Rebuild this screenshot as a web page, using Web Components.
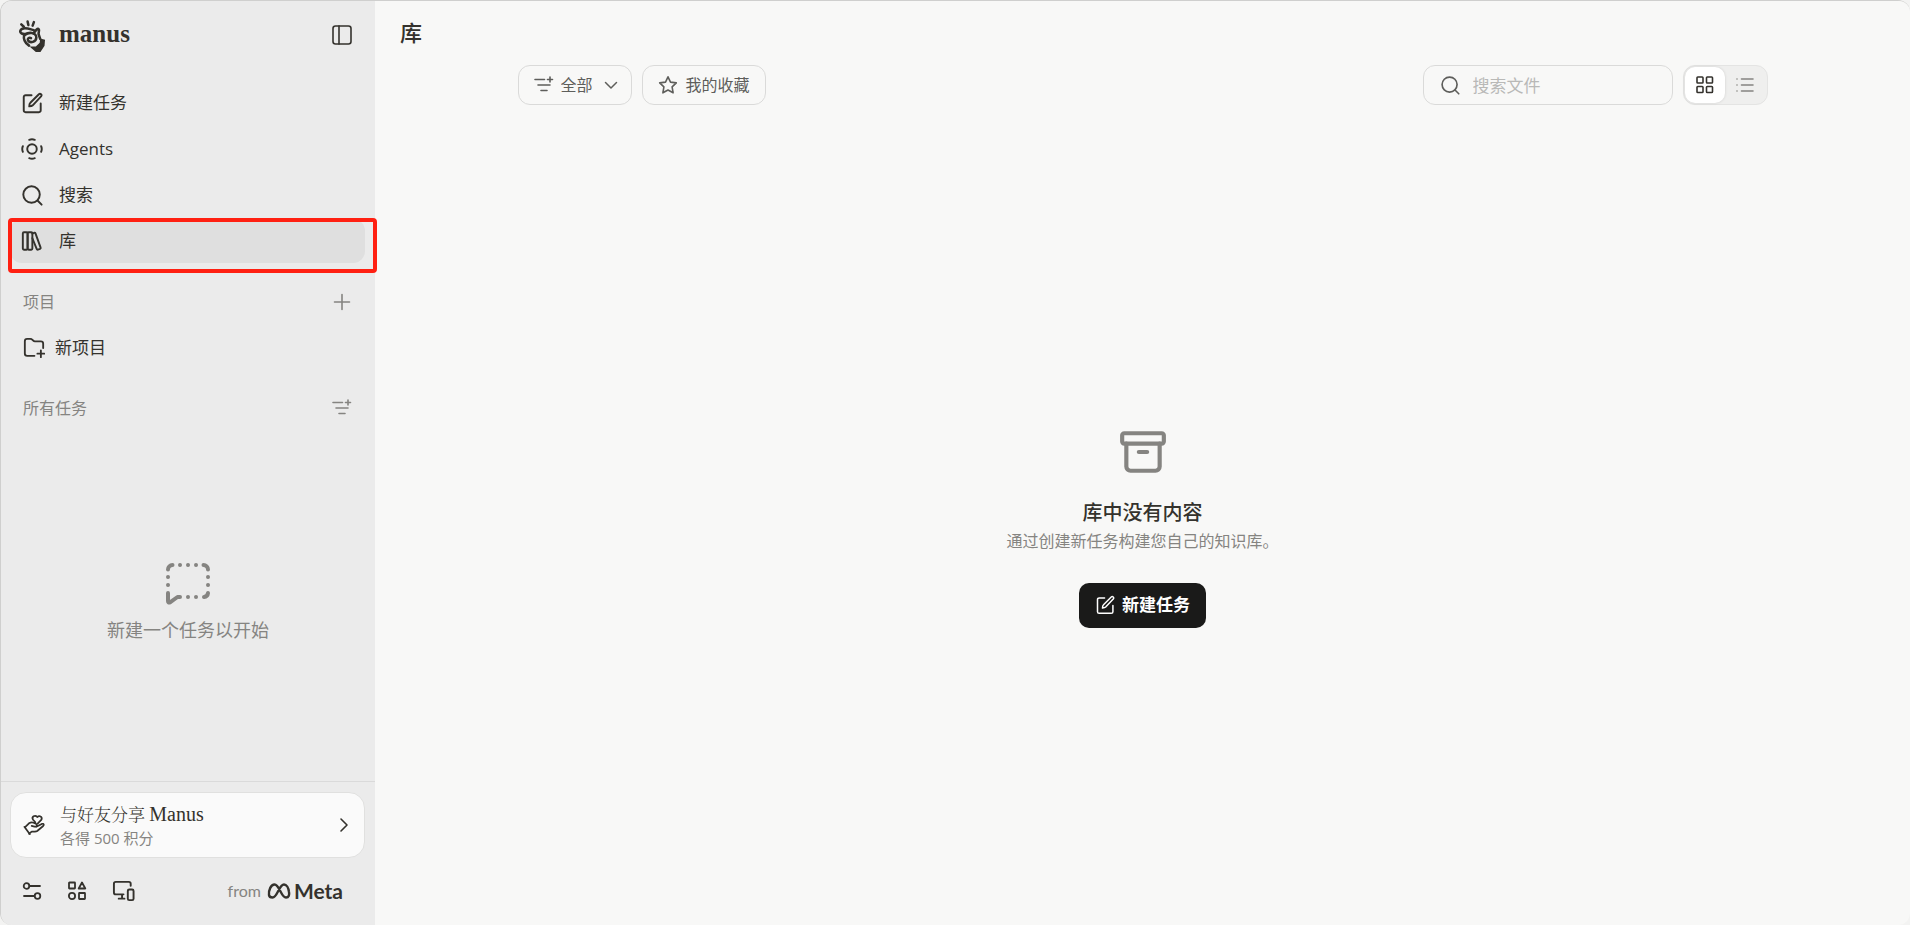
<!DOCTYPE html>
<html lang="zh-CN">
<head>
<meta charset="utf-8">
<title>Manus 库</title>
<style>
html, body { margin: 0; height: 100%; background: #f3f3f2; }
body { font-family: "Open Sans", "Noto Sans CJK SC", sans-serif; color: #34322d; }
</style>
</head>
<body>
<manus-app></manus-app>
<script>
const icons = {
  logo: ['0 0 32 36', `<g stroke-width="2.6"><path d="M6.500 7.500l2.600 2.500M13 4.500l.800 3.800M19.500 5.200l-1.300 3.700"/><path d="M19 17l3.200-4q2-2 2.600.500l-.500 4 1.700 5M19.500 13.500c-3-.500-6-2.300-10.500-1.800-4 .500-4.500 4-2 5.300 2 .800 3.500.300 4.500.300M9.500 18c-1.200 5 .500 8.500 5 11.500"/><path d="M10 18.500c5.500-4 12-2 12 2.700s-6.500 6-8.500 3c-1-2 1-3.500 3-2.500"/></g><path d="M26 22l5 1.500-.500 6-4.500 7-4.500-.500-6.500-5.500 6.500-.200 4-3.800z" fill="currentColor" stroke="none"/>`],
  panel: ['0 0 20 20', '<rect x="1" y="1" width="18" height="18" rx="2.500"/><path d="M7 1v18"/>'],
  edit: ['0 0 24 24', '<path d="M11.500 3.500H5a2 2 0 0 0-2 2V20a2 2 0 0 0 2 2h14.500a2 2 0 0 0 2-2v-7.500"/><path d="M19.500 2.400a1.700 1.700 0 0 1 2.400 2.400L12.800 14.500q-1 1-3.800 1.200 0-3 1.200-4z"/>'],
  agents: ['0 0 24 24', '<circle cx="12" cy="12" r="5.200"/><path d="M9 2q3-1.300 6 0M9 22q3 1.300 6 0M2 9q-1.300 3 0 6M22 9q1.300 3 0 6"/>'],
  search: ['0 0 24 24', '<circle cx="11.500" cy="11.500" r="9"/><path d="M18 18l4.500 4.500"/>'],
  library: ['0 0 24 24', '<rect x="2" y="2.500" width="5.200" height="19" rx="1.200"/><rect x="7.200" y="2.500" width="5.200" height="19" rx="1.200"/><path d="M12.400 4l2-1q1-.300 1.400.700l5.600 15.500q.300 1-.600 1.400l-2.300.800q-1 .300-1.400-.700L12.400 9"/>'],
  plus: ['0 0 20 20', '<path d="M10 2.500v15M2.500 10h15"/>'],
  folder: ['0 0 24 24', '<path d="M12.500 20.500H4.500A2.500 2.500 0 0 1 2 18V4.500A2.500 2.500 0 0 1 4.500 2H8q1.400 0 2.200 1l1 1q.700.800 1.800.800h6.500A2.500 2.500 0 0 1 22 7.300V12M19.500 14.500v7.500M15.700 18.200h7.600"/>'],
  filter: ['0 0 20 20', '<path d="M1 4.500h9.500M4 10h12M7 15.500h6M16 2v5M13.500 4.500h5"/>'],
  chat: ['0 0 50 50', '<path d="M5 10.500A4.500 4.500 0 0 1 9.500 6M40.500 6a4.500 4.500 0 0 1 4.500 4.500M45 34a4.500 4.500 0 0 1-4 4M17 38h-2.500L7 43.400q-2 .800-2-1.400v-8M17 6h.010M25 6h.010M33 6h.010M5 18h.010M5 26h.010M45 18h.010M45 26h.010M25 38h.010M33 38h.010"/>'],
  share: ['0 0 24 24', '<path d="M2 14.500l4.500-4.300q2.500-1.600 5-.700l2.500 1.200q2 1.300.500 2.800-.700.500-2 .200l-3-.700M14.500 14l6-3.200q2-.600 2.200 1 0 .800-1 1.600l-6.200 5.100q-1 .700-2.500.700H9.500L6.500 21.500M1.500 14l6 8M13.500 9L11 6.300q-1.600-2.300.5-3.800 2.300-1.200 4 .8 2-1.800 4-.4 1.700 1.600.4 3.600l-3.700 3.800"/>'],
  chevronRight: ['0 0 20 20', '<path d="M7 4l6 6-6 6"/>'],
  chevronDown: ['0 0 20 20', '<path d="M4.500 7.500l5.500 5.500 5.500-5.500"/>'],
  sliders: ['0 0 20 20', '<circle cx="4.500" cy="5" r="2.800"/><circle cx="15.500" cy="15" r="2.800"/><path d="M7.500 5h10.500M2 15h10.500"/>'],
  shapes: ['0 0 20 20', '<rect x="2" y="1.500" width="6" height="6" rx=".500"/><rect x="12" y="12" width="6" height="6" rx=".500"/><circle cx="5" cy="15" r="3.100"/><path d="M15 1.500l3.300 6h-6.600z"/>'],
  devices: ['0 0 24 24', '<path d="M12 16H4a2 2 0 0 1-2-2V5a2 2 0 0 1 2-2h13.500a2 2 0 0 1 2 2v2M10.500 16v4M7 20.500h6"/><rect x="16.500" y="11" width="6" height="11" rx="1.500"/>'],
  meta: ['0 0 24 16', '<path d="M2 12C1.500 7 4 1.500 7.500 1.500c5 0 6.500 13 11.500 13 3 0 3.500-3 3-5.500-.500-4-2.500-7.500-5-7.500-5 0-6.500 13-11.500 13Q2.300 14.500 2 12z"/>'],
  star: ['0 0 20 20', '<path d="M10 1.800l2.500 5.300 5.800.8-4.200 4 1 5.900-5.100-2.800-5.100 2.800 1-5.900-4.200-4 5.800-.8z"/>'],
  grid: ['0 0 20 20', '<rect x="2" y="2" width="6" height="6" rx=".800"/><rect x="11.500" y="2" width="6" height="6" rx=".800"/><rect x="2" y="11.500" width="6" height="6" rx=".800"/><rect x="11.500" y="11.500" width="6" height="6" rx=".800"/>'],
  list: ['0 0 20 20', '<path d="M6.500 4h11.500M6.500 10h11.500M6.500 16h11.500M2 4h.010M2 10h.010M2 16h.010"/>'],
  archive: ['0 0 24 24', '<rect x="2" y="3" width="20" height="5" rx="1"/><path d="M4 8v11a2 2 0 0 0 2 2h12a2 2 0 0 0 2-2V8M10 12h4"/>']
};
const define = (name, markup) => customElements.define(name, class extends HTMLElement {
  constructor() {
    super();
    this.attachShadow({ mode: 'open' }).innerHTML = `<style>*{box-sizing:border-box}button,input,select{font:inherit;color:inherit;margin:0;padding:0;border:0;background:none}a{color:inherit;text-decoration:none}h1,h2,p{margin:0}</style>` + (typeof markup === 'function' ? markup(this) : markup);
  }
});

define('m-icon', el => {
  const [box, body] = icons[el.getAttribute('name')];
  const w = el.getAttribute('width') || el.getAttribute('size') || 20;
  const h = el.getAttribute('height') || el.getAttribute('size') || 20;
  return `<style>:host{display:block;flex:none}svg{display:block}</style>
  <svg width="${w}" height="${h}" viewBox="${box}" fill="none" stroke="currentColor" stroke-width="${el.getAttribute('stroke') || 1.6}" stroke-linecap="round" stroke-linejoin="round" aria-hidden="true">${body}</svg>`;
});

define('nav-item', el => `<style>
:host{display:block;position:relative}
a{display:flex;align-items:center;gap:16px;height:44px;padding:0 11px;border-radius:12px;font-size:17px;line-height:24px}
:host([active]) a{background:#dfdfdf}
</style><a href="#"${el.hasAttribute('active') ? ' aria-current="page"' : ''}><m-icon name="${el.getAttribute('icon')}" size="22" stroke="2.1"></m-icon><slot></slot></a><slot name="mark"></slot>`);

define('highlight-box', `<style>:host{position:absolute;inset:-1px -12px -10px -2px;border:4px solid #ff2012;border-radius:4px;z-index:2;pointer-events:none}</style>`);

define('section-head', el => `<style>
:host{display:flex;align-items:center;justify-content:space-between;height:40px;padding:0 13px;color:#858481;font-size:16px;line-height:24px}
h2{font-size:inherit;font-weight:400}button{display:block}
</style><h2><slot></slot></h2><button aria-label="${el.getAttribute('action')}"><m-icon name="${el.getAttribute('icon')}" size="20" stroke="1.6"></m-icon></button>`);

define('share-card', `<style>
:host{display:block}
a{display:flex;align-items:center;gap:15px;height:66px;padding:0 10px 0 12px;background:#fafafa;border:1px solid #e0e0df;border-radius:16px}
div{flex:1}
.t{font:300 17px/24px "Liberation Serif","Noto Serif CJK SC","Noto Sans CJK SC",serif}
.t span{font-size:20px}
.s{font-size:15px;line-height:20px;color:#858481}
m-icon{color:#34322d}
</style><a href="#"><m-icon name="share" size="22" stroke="1.9"></m-icon><div><p class="t">与好友分享 <span>Manus</span></p><p class="s">各得 500 积分</p></div><m-icon name="chevronRight" size="20"></m-icon></a>`);

define('side-bar', `<style>
:host{display:flex;flex-direction:column;position:relative;z-index:1;width:374px;flex:none;background:#ebebeb}
header{display:flex;align-items:center;justify-content:space-between;padding:12px 23px 0 14px;height:54px}
header button{padding-top:2px}
.brand{display:flex;align-items:center;gap:13px;font:700 25px/30px "Liberation Serif",serif}
nav{display:flex;flex-direction:column;gap:2px;padding:26px 10px 0 9px}
.head{padding:19px 10px 0 9px}
.project{display:flex;align-items:center;gap:10px;height:44px;padding:0 13px;margin:4px 9px 0;font-size:17px;line-height:24px}
.project + .head{padding-top:18px}
.empty{flex:1;display:flex;flex-direction:column;align-items:center;justify-content:center;gap:9px;color:#858481;font-size:18px;line-height:24px;padding-bottom:8px}
footer{border-top:1px solid #dadada;padding:10px 10px 0 9px;height:144px}
.tools{display:flex;align-items:center;gap:25px;padding:21px 22px 0 12px}
.tools button{display:block}
.from{display:flex;align-items:center;gap:6px;margin-left:auto;font-family:Lato,sans-serif;font-size:16px;line-height:22px;color:#858481}
.meta{display:flex;align-items:center;gap:3px;color:#34322d;font-size:21px;font-weight:700}
</style>
<header><div class="brand"><m-icon name="logo" width="31" height="35"></m-icon><span>manus</span></div><button aria-label="收起侧边栏"><m-icon name="panel" size="20"></m-icon></button></header>
<nav>
<nav-item icon="edit">新建任务</nav-item><nav-item icon="agents">Agents</nav-item><nav-item icon="search">搜索</nav-item>
<nav-item icon="library" active>库<highlight-box slot="mark"></highlight-box></nav-item>
</nav>
<div class="head"><section-head icon="plus" action="新建项目">项目</section-head></div>
<a class="project" href="#"><m-icon name="folder" size="22" stroke="2"></m-icon>新项目</a>
<div class="head"><section-head icon="filter" action="筛选任务">所有任务</section-head></div>
<div class="empty"><m-icon name="chat" size="50" stroke="4"></m-icon><p>新建一个任务以开始</p></div>
<footer><share-card></share-card>
<div class="tools"><button aria-label="设置"><m-icon name="sliders" size="20" stroke="1.8"></m-icon></button><button aria-label="应用"><m-icon name="shapes" size="20" stroke="1.8"></m-icon></button><button aria-label="设备"><m-icon name="devices" size="23" stroke="2"></m-icon></button>
<div class="from"><span>from</span><span class="meta"><m-icon name="meta" width="24" height="16" stroke="2.4"></m-icon>Meta</span></div></div>
</footer>`);

define('library-toolbar', `<style>
:host{display:flex;gap:10px;width:100%;max-width:1250px;height:40px;margin:0 auto;font-size:16px;line-height:24px;color:#5e5e5b}
.box{border:1px solid #dadad9;border-radius:12px}
.filter{display:grid;grid-template-columns:15px 20px 1fr 20px 10px;align-items:center;width:114px}
.filter select{grid-area:1/1/2/6;width:100%;height:100%;padding-left:42px;appearance:none}
.filter m-icon{grid-row:1;pointer-events:none}
.fav{display:flex;align-items:center;gap:8px;padding:0 15px}
.search{display:flex;align-items:center;gap:13px;width:250px;padding:0 16px;margin-left:auto}
.search input{flex:1;min-width:0;height:38px;outline:0;font-size:17px}
.search input::placeholder{color:#b9b9b7;opacity:1}
.views{display:flex;width:85px;padding:1px;background:#efefee;border-color:#e4e4e3}
.views button{flex:1;display:grid;place-items:center;border-radius:10px;color:#858481}
.views .on{background:#fff;color:#34322d;box-shadow:0 0 3px #00000022}
</style>
<label class="filter box"><select aria-label="文件类型"><option>全部</option></select><m-icon name="filter" style="grid-column:2"></m-icon><m-icon name="chevronDown" size="20" stroke="1.5" style="grid-column:4"></m-icon></label>
<button class="fav box"><m-icon name="star"></m-icon>我的收藏</button>
<label class="search box"><m-icon name="search" size="20" stroke="2"></m-icon><input type="search" placeholder="搜索文件" aria-label="搜索文件"></label>
<div class="views box"><button class="on" aria-label="网格视图"><m-icon name="grid"></m-icon></button><button aria-label="列表视图"><m-icon name="list"></m-icon></button></div>`);

define('empty-library', `<style>
:host{display:flex;flex-direction:column;align-items:center;justify-content:center;flex:1;padding-top:24px}
.art{color:#858481}
h2{margin-top:21px;font-size:20px;line-height:30px;font-weight:500}
p{margin-top:1px;font-size:16px;line-height:24px;color:#858481}
button{display:flex;align-items:center;gap:7px;height:45px;margin-top:30px;padding:0 16px;border-radius:10px;background:#1a1a19;color:#fff;font-size:17px;line-height:24px;font-weight:600}
</style><m-icon class="art" name="archive" size="50" stroke="2"></m-icon><h2>库中没有内容</h2><p>通过创建新任务构建您自己的知识库。</p><button><m-icon name="edit" size="20" stroke="1.800"></m-icon>新建任务</button>`);

define('library-page', `<style>
:host{display:flex;flex-direction:column;flex:1;min-width:0;background:#f8f8f7}
h1{padding:15px 25px 0;height:64px;box-sizing:border-box;font-size:22px;line-height:32px;font-weight:500}
</style><h1>库</h1><library-toolbar></library-toolbar><empty-library></empty-library>`);

define('manus-app', `<style>
:host{display:flex;min-height:100vh;box-sizing:border-box;border:1px solid #cfcfce;border-width:1px 0 0 1px;border-radius:12px;overflow:hidden}
</style><side-bar></side-bar><library-page></library-page>`);
</script>
</body>
</html>
